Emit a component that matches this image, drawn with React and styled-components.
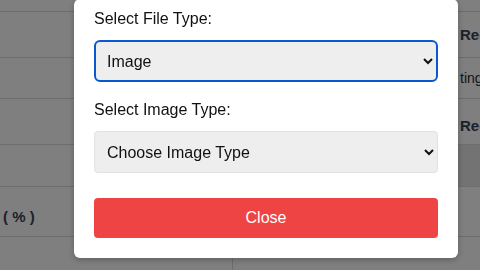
import React from 'react';
import styled, { createGlobalStyle } from 'styled-components';

//<---Styling--->
const GlobalStyle = createGlobalStyle`
    html, body {
        margin: 0;
        padding: 0;
        background: #ffffff;
        font-family: "Liberation Sans", Arial, sans-serif;
        overflow: hidden;
    }
`;

const Table = styled.div`
    width: 480px;
    display: grid;
    grid-template-columns: 233px 224px 1fr;
`;

const Cell = styled.div`
    height: ${({ h }) => h}px;
    box-sizing: border-box;
    border-bottom: 1px solid #dcdcdc;
    border-right: ${({ divider }) => (divider ? '1px solid #dcdcdc' : 'none')};
    background: ${({ shade }) => (shade ? '#e6e6e6' : '#ffffff')};
    display: flex;
    align-items: center;
    padding: ${({ drop }) => drop || 0}px 0 0 3px;
    font-size: ${({ bold }) => (bold ? 15 : 14)}px;
    font-weight: ${({ bold }) => (bold ? 700 : 400)};
    color: ${({ bold }) => (bold ? '#3a4354' : '#1f2937')};
    white-space: nowrap;
`;

const Overlay = styled.div`
    position: fixed;
    inset: 0;
    background: rgba(0, 0, 0, 0.5);
    display: flex;
    align-items: flex-end;
    padding: 0 0 12px 74px;
    box-sizing: border-box;
`;

const Modal = styled.div`
    width: 384px;
    background: #ffffff;
    border-radius: 6px;
    box-shadow: 0 2px 6px rgba(0, 0, 0, 0.25);
    padding: 0 20px 20px;
    box-sizing: border-box;
    display: flex;
    flex-direction: column;
`;

const Label = styled.label`
    display: block;
    font-size: 16px;
    line-height: 24px;
    color: #111111;
    margin: ${({ first }) => (first ? '8px' : '16px')} 0 9px;
`;

const Select = styled.select`
    width: 100%;
    height: 42px;
    box-sizing: border-box;
    font-family: "Liberation Sans", Arial, sans-serif;
    font-size: 16px;
    color: #111111;
    background-color: #eeeeee;
    border: ${({ active }) => (active ? '2px solid #0b57d0' : '1px solid #e2e2e2')};
    border-radius: ${({ active }) => (active ? '6px' : '4px')};
    padding: 0 ${({ active }) => (active ? '7px' : '8px')};
    outline: none;
`;

const CloseButton = styled.button`
    margin-top: 25px;
    width: 100%;
    height: 40px;
    border: none;
    border-radius: 4px;
    background: #ef4444;
    color: #ffffff;
    font-family: "Liberation Sans", Arial, sans-serif;
    font-size: 16px;
    cursor: pointer;
`;
//<---Styling ending--->

const rows = [
    { h: 12, left: '', mid: '', right: '' },
    { h: 46, left: '', mid: '', right: 'Rec', bold: true },
    { h: 41, left: '', mid: '', right: 'ting' },
    { h: 46, left: '', mid: '', right: 'Rec', bold: true, drop: 8 },
    { h: 42, left: '', mid: '', right: '', shade: true },
    { h: 50, left: '( % )', mid: '', right: '', bold: true, drop: 10 },
    { h: 40, left: '', mid: '', right: '' },
];

export default function App() {
    return (
        <>
            <GlobalStyle />
            <Table>
                {rows.map((row, i) => (
                    <React.Fragment key={i}>
                        <Cell h={row.h} divider bold={row.bold} drop={row.drop}>{row.left}</Cell>
                        <Cell h={row.h} shade={row.shade} bold={row.bold} drop={row.drop}>{row.mid}</Cell>
                        <Cell h={row.h} shade={row.shade} bold={row.bold} drop={row.drop}>{row.right}</Cell>
                    </React.Fragment>
                ))}
            </Table>
            <Overlay>
                <Modal>
                    <Label first htmlFor="fileType">Select File Type:</Label>
                    <Select id="fileType" active defaultValue="image">
                        <option value="">Choose File Type</option>
                        <option value="image">Image</option>
                        <option value="video">Video</option>
                    </Select>
                    <Label htmlFor="imageType">Select Image Type:</Label>
                    <Select id="imageType" defaultValue="">
                        <option value="">Choose Image Type</option>
                        <option value="png">PNG</option>
                        <option value="jpg">JPG</option>
                    </Select>
                    <CloseButton>Close</CloseButton>
                </Modal>
            </Overlay>
        </>
    );
}
